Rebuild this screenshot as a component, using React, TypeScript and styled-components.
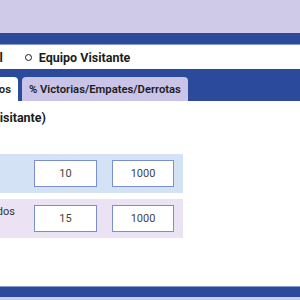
import React from "react";
import styled, { createGlobalStyle } from "styled-components";

const Global = createGlobalStyle`
  html, body { margin: 0; padding: 0; background: #ffffff; }
  body { width: 300px; height: 300px; overflow: hidden; font-family: Roboto, "Open Sans", "Liberation Sans", sans-serif; }
`;

const Page = styled.div`
  width: 300px;
  height: 300px;
  display: flex;
  flex-direction: column;
  overflow: hidden;
  background: #ffffff;
`;

const TopBand = styled.div`
  height: 33px;
  background: #cecae8;
  flex-shrink: 0;
`;

const NavBand = styled.div`
  height: 11px;
  background: #2b4a9b;
  border-bottom: 1px solid #8a9bd0;
  flex-shrink: 0;
`;

const RadioBar = styled.div`
  height: 24px;
  display: flex;
  align-items: center;
  gap: 22px;
  margin-left: -83px;
  flex-shrink: 0;
`;

const RadioOption = styled.label`
  display: flex;
  align-items: center;
  gap: 7px;
  font-size: 12.5px;
  font-weight: 700;
  color: #1c1c1c;
  white-space: nowrap;
`;

const RadioDot = styled.span`
  width: 5px;
  height: 5px;
  border: 1.5px solid #1c1c1c;
  border-radius: 50%;
  display: inline-block;
`;

const TabBar = styled.div`
  height: 32px;
  background: #2b4a9b;
  display: flex;
  align-items: flex-end;
  gap: 4px;
  flex-shrink: 0;
`;

const Tab = styled.div<{ $active?: boolean }>`
  height: 24px;
  display: flex;
  align-items: center;
  padding: 0 7px;
  font-size: 11.25px;
  font-weight: 600;
  color: #1c1c1c;
  white-space: nowrap;
  border-radius: 4px 4px 0 0;
  background: ${(p) => (p.$active ? "#ffffff" : "#c9c4e8")};
  ${(p) => (p.$active ? "margin-left: -76px;" : "")}
`;

const Content = styled.div`
  flex: 1;
  display: flex;
  flex-direction: column;
  margin-left: -150px;
  padding-top: 8px;
`;

const Heading = styled.div`
  width: 196px;
  text-align: right;
  font-size: 12.5px;
  font-weight: 700;
  color: #1c1c1c;
  white-space: nowrap;
  height: 18px;
  line-height: 18px;
  direction: rtl;
  unicode-bidi: plaintext;
`;

const Table = styled.div`
  margin-top: 27px;
  display: flex;
  flex-direction: column;
  gap: 6px;
  width: 333px;
`;

const Row = styled.div<{ $tone: "blue" | "violet" }>`
  display: grid;
  grid-template-columns: 1fr 63px 62px;
  column-gap: 15px;
  align-items: center;
  padding: 6px 9px 6px 0;
  background: ${(p) => (p.$tone === "blue" ? "#d3e3f5" : "#ebe3f3")};
`;

const Label = styled.div`
  font-size: 11px;
  color: #333333;
  line-height: 14px;
  align-self: start;
  padding-left: 82px;
  white-space: nowrap;
`;

const NumBox = styled.div`
  height: 25px;
  border: 1px solid #7b8fd0;
  background: #ffffff;
  display: flex;
  align-items: center;
  justify-content: center;
  font-size: 11px;
  color: #444444;
`;

const Spacer = styled.div`
  flex: 1;
`;

const FooterBand = styled.div`
  height: 10px;
  background: #2b4a9b;
  border-top: 1px solid #8a9bd0;
  border-bottom: 3px solid #cecae8;
  flex-shrink: 0;
`;

export default function App() {
  return (
    <>
      <Global />
      <Page>
        <TopBand />
        <NavBand />
        <RadioBar>
          <RadioOption>
            <RadioDot />
            Equipo Local
          </RadioOption>
          <RadioOption>
            <RadioDot />
            Equipo Visitante
          </RadioOption>
        </RadioBar>
        <TabBar>
          <Tab $active>Goles Anotados</Tab>
          <Tab>% Victorias/Empates/Derrotas</Tab>
        </TabBar>
        <Content>
          <Heading>Estadísticas (Equipo Visitante)</Heading>
          <Table>
            <Row $tone="blue">
              <Label>Goles</Label>
              <NumBox>10</NumBox>
              <NumBox>1000</NumBox>
            </Row>
            <Row $tone="violet">
              <Label>Partidos jugados</Label>
              <NumBox>15</NumBox>
              <NumBox>1000</NumBox>
            </Row>
          </Table>
          <Spacer />
        </Content>
        <FooterBand />
      </Page>
    </>
  );
}
